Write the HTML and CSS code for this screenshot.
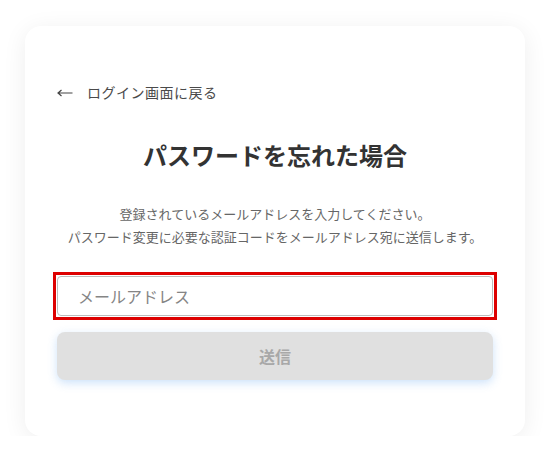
FILE: index.html
```html
<!DOCTYPE html>
<html lang="ja">
<head>
<meta charset="utf-8">
<title>パスワードを忘れた場合</title>
<link rel="stylesheet" href="styles.css">
</head>
<body>
  <main class="card">
    <a class="back" href="#"><svg class="back-arrow" width="16" height="8" viewBox="0 0 16 8"><path d="M15.5 4H1M4.5 1L1 4L4.5 7" fill="none" stroke="#444" stroke-width="1.2"/></svg><span>ログイン画面に戻る</span></a>
    <h1 class="title">パスワードを忘れた場合</h1>
    <p class="desc">登録されているメールアドレスを入力してください。<br>パスワード変更に必要な認証コードをメールアドレス宛に送信します。</p>
    <form class="form">
      <div class="highlight">
        <input class="field" type="email" placeholder="メールアドレス">
      </div>
      <button class="submit" type="button" disabled>送信</button>
    </form>
  </main>
</body>
</html>
```
FILE: styles.css
```css
html, body {
  margin: 0;
  padding: 0;
  background: #ffffff;
}
body {
  font-family: "Noto Sans CJK JP", "Noto Sans", sans-serif;
  padding: 26px 0 0 25px;
}
.card {
  box-sizing: border-box;
  width: 500px;
  height: 410px;
  background: #fff;
  border-radius: 16px;
  box-shadow: 0 4px 24px rgba(0, 0, 0, 0.07);
  padding: 56px 32px 56px 32px;
  display: flex;
  flex-direction: column;
}
.back {
  display: flex;
  align-items: center;
  gap: 14px;
  font-size: 14px;
  line-height: 20px;
  letter-spacing: 0.5px;
  color: #4a4a4a;
  text-decoration: none;
}
.back-arrow {
  display: block;
  margin-top: 2px;
}
.title {
  margin: 35px 0 0;
  font-size: 24px;
  line-height: 36px;
  font-weight: 700;
  color: #333;
  text-align: center;
}
.desc {
  margin: 29px 0 0;
  font-size: 13px;
  line-height: 23px;
  color: #666;
  text-align: center;
}
.form {
  display: flex;
  flex-direction: column;
  gap: 12px;
  margin-top: 24px;
  margin-left: -4px;
  margin-right: -4px;
}
.highlight {
  border: 3px solid #dd0000;
  padding: 1px;
}
.field {
  display: block;
  box-sizing: border-box;
  height: 40px;
  width: 100%;
  border: 1px solid #bdbdbd;
  border-radius: 4px;
  padding: 0 20px;
  font-family: inherit;
  font-size: 16px;
  color: #333;
  outline: none;
}
.field::placeholder {
  color: #858585;
}
.submit {
  height: 48px;
  margin: 0 4px;
  border: none;
  border-radius: 8px;
  background: #e0e0e0;
  color: #a8a8a8;
  font-family: inherit;
  font-size: 16px;
  font-weight: 700;
  box-shadow: 0 3px 10px rgba(90, 160, 240, 0.3);
}
```
